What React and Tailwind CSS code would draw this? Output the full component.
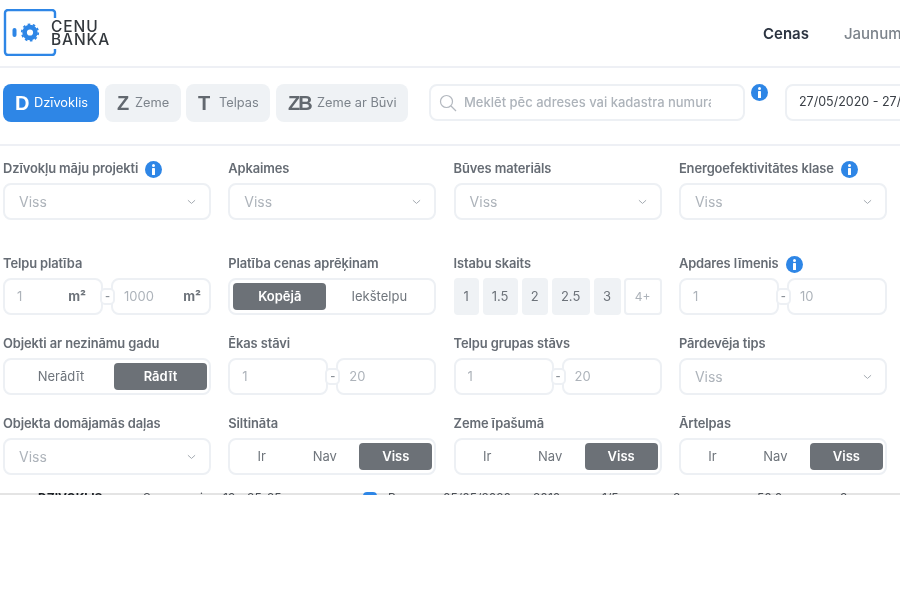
import React from 'react';

const font = "font-['Inter','Liberation_Sans',sans-serif]";

function InfoIcon({ size = 'w-[17px] h-[17px]' }) {
  return (
    <svg viewBox="0 0 17 17" className={`${size} shrink-0`}>
      <circle cx="8.5" cy="8.5" r="8.5" fill="#2e86e6" />
      <circle cx="8.5" cy="4.6" r="1.5" fill="#fff" />
      <rect x="7" y="7" width="3" height="7" rx="0.6" fill="#fff" />
    </svg>
  );
}

function Chevron() {
  return (
    <svg viewBox="0 0 10 6" className="w-[9px] h-[6px]" fill="none" stroke="#a4aab1" strokeWidth="1.1">
      <path d="M1 1l4 3.6L9 1" />
    </svg>
  );
}

function Logo() {
  return (
    <div className="flex items-start">
      <svg viewBox="0 0 57 47" className="w-[57px] h-[47px] mt-[9px] ml-[3px] shrink-0" fill="none">
        <path d="M52 9V4a3 3 0 0 0-3-3H5a3 3 0 0 0-3 3v39a3 3 0 0 0 3 3h44a3 3 0 0 0 3-3v-3" stroke="#2e86e6" strokeWidth="2.4" />
        <rect x="9.5" y="19" width="4" height="9" rx="2" fill="#2e86e6" />
        <circle cx="27" cy="23.5" r="5.4" stroke="#2e86e6" strokeWidth="4.6" />
        <circle cx="27" cy="23.5" r="8.2" stroke="#2e86e6" strokeWidth="1.8" strokeDasharray="2.6 2.55" />
      </svg>
      <div className="-ml-[9px] mt-[19.5px] text-[15.5px] leading-[13.5px] font-medium tracking-[0.9px] text-[#33383d]">
        <div>CENU</div>
        <div>BANKA</div>
      </div>
    </div>
  );
}

function Tab({ letter, label, active, className, letterClass }) {
  return (
    <div className={`h-[38px] rounded-lg flex items-center shrink-0 pl-[12px] ${active ? 'bg-[#2e86e6] text-white' : 'bg-[#eff2f5] text-[#7c838b]'} ${className}`}>
      <span className={`text-[20px] font-bold font-['Liberation_Sans',sans-serif] ${active ? 'text-white' : 'text-[#62686f]'} ${letterClass}`}>{letter}</span>
      <span className="text-[12.8px]">{label}</span>
    </div>
  );
}

function Field({ label, info }) {
  return (
    <div className="h-[20px] mb-[5px] pt-[2px] flex items-center gap-[7px] text-[12.9px] tracking-[-0.1px] font-semibold text-[#666c74] whitespace-nowrap">
      {label}
      {info && <InfoIcon />}
    </div>
  );
}

function SelectBox() {
  return (
    <div className="h-[37px] rounded-lg border-2 border-[#edf0f4] flex items-center justify-between pl-[14px] pr-[13px] text-[14px] text-[#adb3ba]">
      Viss
      <Chevron />
    </div>
  );
}

function RangeBox({ from, to, unit }) {
  return (
    <div className="relative grid grid-cols-2 gap-[8px]">
      <div className="h-[37px] rounded-lg border-2 border-[#edf0f4] flex items-center justify-between pl-[12px] pr-[15px] text-[13px] text-[#adb3ba]">
        {from}
        {unit && <span className="text-[13px] font-bold text-[#6d737a]">m²</span>}
      </div>
      <div className="h-[37px] rounded-lg border-2 border-[#edf0f4] flex items-center justify-between pl-[11px] pr-[8px] text-[13px] text-[#adb3ba]">
        {to}
        {unit && <span className="text-[13px] font-bold text-[#6d737a]">m²</span>}
      </div>
      <div className="absolute left-[97px] top-[10px] w-[15px] h-[17px] rounded-[5px] border-2 border-[#edf0f4] bg-white flex items-center justify-center text-[11px] font-semibold text-[#8c9299]">
        -
      </div>
    </div>
  );
}

function Toggle({ options, activeIdx, cols }) {
  return (
    <div className={`h-[37px] rounded-lg border-2 border-[#edf0f4] pl-[3px] pr-[2px] py-[3px] grid ${cols}`}>
      {options.map((o, i) => (
        <div
          key={o}
          className={`flex items-center justify-center rounded text-[13px] ${i === activeIdx ? 'bg-[#6c7177] text-white font-semibold' : 'text-[#6f757c]'}`}
        >
          {o}
        </div>
      ))}
    </div>
  );
}

function Rooms() {
  const rooms = [
    ['1', 'w-[25px]'],
    ['1.5', 'w-[35px]'],
    ['2', 'w-[26px]'],
    ['2.5', 'w-[38px]'],
    ['3', 'w-[27px]'],
  ];
  return (
    <div className="flex gap-[4px]">
      {rooms.map(([r, w]) => (
        <div key={r} className={`h-[37px] ${w} rounded bg-[#eff2f5] flex items-center justify-center text-[13px] text-[#6d737a]`}>
          {r}
        </div>
      ))}
      <div className="h-[37px] w-[38px] -ml-[1px] rounded border-2 border-[#edf0f4] flex items-center justify-center text-[12px] text-[#adb3ba]">
        4+
      </div>
    </div>
  );
}

const threeCols = 'grid-cols-[57px_69px_73px]';

export default function App() {
  return (
    <div className={`w-[900px] h-[600px] overflow-hidden bg-white blur-[0.5px] ${font}`}>
      {/* top bar */}
      <div className="h-[68px] border-b-2 border-[#eef0f5] flex justify-between whitespace-nowrap">
        <Logo />
        <div className="flex items-center gap-[35px] w-[137px] pt-[3px] text-[15px] font-medium">
          <span className="font-semibold text-[#2b3340]">Cenas</span>
          <span className="text-[#7c838b]">Jaunumi</span>
        </div>
      </div>

      {/* type tabs and search */}
      <div className="h-[78px] border-b-2 border-[#eef0f5] pt-[16px] pl-[3px] flex items-start whitespace-nowrap">
        <Tab letter="D" label="Dzīvoklis" active className="w-[96px]" letterClass="w-[19px]" />
        <Tab letter="Z" label="Zeme" className="w-[76px] ml-[6px]" letterClass="w-[18px]" />
        <Tab letter="T" label="Telpas" className="w-[84px] ml-[5px]" letterClass="w-[21px]" />
        <Tab letter="ZB" label="Zeme ar Būvi" className="w-[132px] ml-[6px]" letterClass="w-[29px] tracking-[-2px]" />

        <div className="w-[316px] h-[37px] ml-[21px] rounded-lg border-2 border-[#edf0f4] flex items-center pl-[8px] pr-[32px] overflow-hidden shrink-0">
          <svg viewBox="0 0 18 18" className="w-[18px] h-[18px] shrink-0" fill="none" stroke="#b3b8bf" strokeWidth="1.2">
            <circle cx="7.5" cy="7.5" r="6" />
            <path d="M12 12l5 5" />
          </svg>
          <span className="ml-[7px] text-[13px] font-medium text-[#adb3ba] overflow-hidden">Meklēt pēc adreses vai kadastra numura</span>
        </div>
        <div className="ml-[6px]">
          <InfoIcon />
        </div>
        <div className="w-[160px] h-[37px] ml-[17px] rounded-lg border-2 border-[#edf0f4] flex items-center pl-[12px] text-[12.5px] text-[#3b4047] shrink-0">
          27/05/2020 - 27/05/2021
        </div>
      </div>

      {/* filters */}
      <div className="pl-[3px] pt-[12px] grid grid-cols-[208px_208px_208px_208px] gap-x-[17.3px] gap-y-[18px]">
        <div><Field label="Dzīvokļu māju projekti" info /><SelectBox /></div>
        <div><Field label="Apkaimes" /><SelectBox /></div>
        <div><Field label="Būves materiāls" /><SelectBox /></div>
        <div><Field label="Energoefektivitātes klase" info /><SelectBox /></div>

        <div className="mt-[15px]"><Field label="Telpu platība" /><RangeBox from="1" to="1000" unit /></div>
        <div className="mt-[15px]"><Field label="Platība cenas aprēķinam" /><Toggle options={['Kopējā', 'Iekštelpu']} activeIdx={0} cols="grid-cols-[93px_1fr]" /></div>
        <div className="mt-[15px]"><Field label="Istabu skaits" /><Rooms /></div>
        <div className="mt-[15px]"><Field label="Apdares līmenis" info /><RangeBox from="1" to="10" /></div>

        <div><Field label="Objekti ar nezināmu gadu" /><Toggle options={['Nerādīt', 'Rādīt']} activeIdx={1} cols="grid-cols-[1fr_93px]" /></div>
        <div><Field label="Ēkas stāvi" /><RangeBox from="1" to="20" /></div>
        <div><Field label="Telpu grupas stāvs" /><RangeBox from="1" to="20" /></div>
        <div><Field label="Pārdevēja tips" /><SelectBox /></div>

        <div><Field label="Objekta domājamās daļas" /><SelectBox /></div>
        <div><Field label="Siltināta" /><Toggle options={['Ir', 'Nav', 'Viss']} activeIdx={2} cols={threeCols} /></div>
        <div><Field label="Zeme īpašumā" /><Toggle options={['Ir', 'Nav', 'Viss']} activeIdx={2} cols={threeCols} /></div>
        <div><Field label="Ārtelpas" /><Toggle options={['Ir', 'Nav', 'Viss']} activeIdx={2} cols={threeCols} /></div>
      </div>

      {/* table row cut off behind the filters */}
      <div className="mt-[17px] h-[3px] overflow-hidden bg-[linear-gradient(to_bottom,white_1px,#e4e4e4_1px)] grid grid-cols-[38px_105px_37px_20px_23px_24px_20px_96px_25px_55px_90px_69px_71px_84px_83px_60px] text-[12px] leading-[12px] text-[#4a4f55] whitespace-nowrap">
        <span />
        <span className="font-bold text-[#1b1f24] uppercase">Dzīvoklis</span>
        <span>Sa</span>
        <span>a</span>
        <span>i</span>
        <span>19</span>
        <span>35</span>
        <span>25</span>
        <span className="w-[14px] h-[14px] rounded-sm bg-[#2e86e6]" />
        <span>B</span>
        <span>05/05/2020</span>
        <span>2010</span>
        <span>1/5</span>
        <span>3</span>
        <span>50.0</span>
        <span>3</span>
      </div>
    </div>
  );
}
